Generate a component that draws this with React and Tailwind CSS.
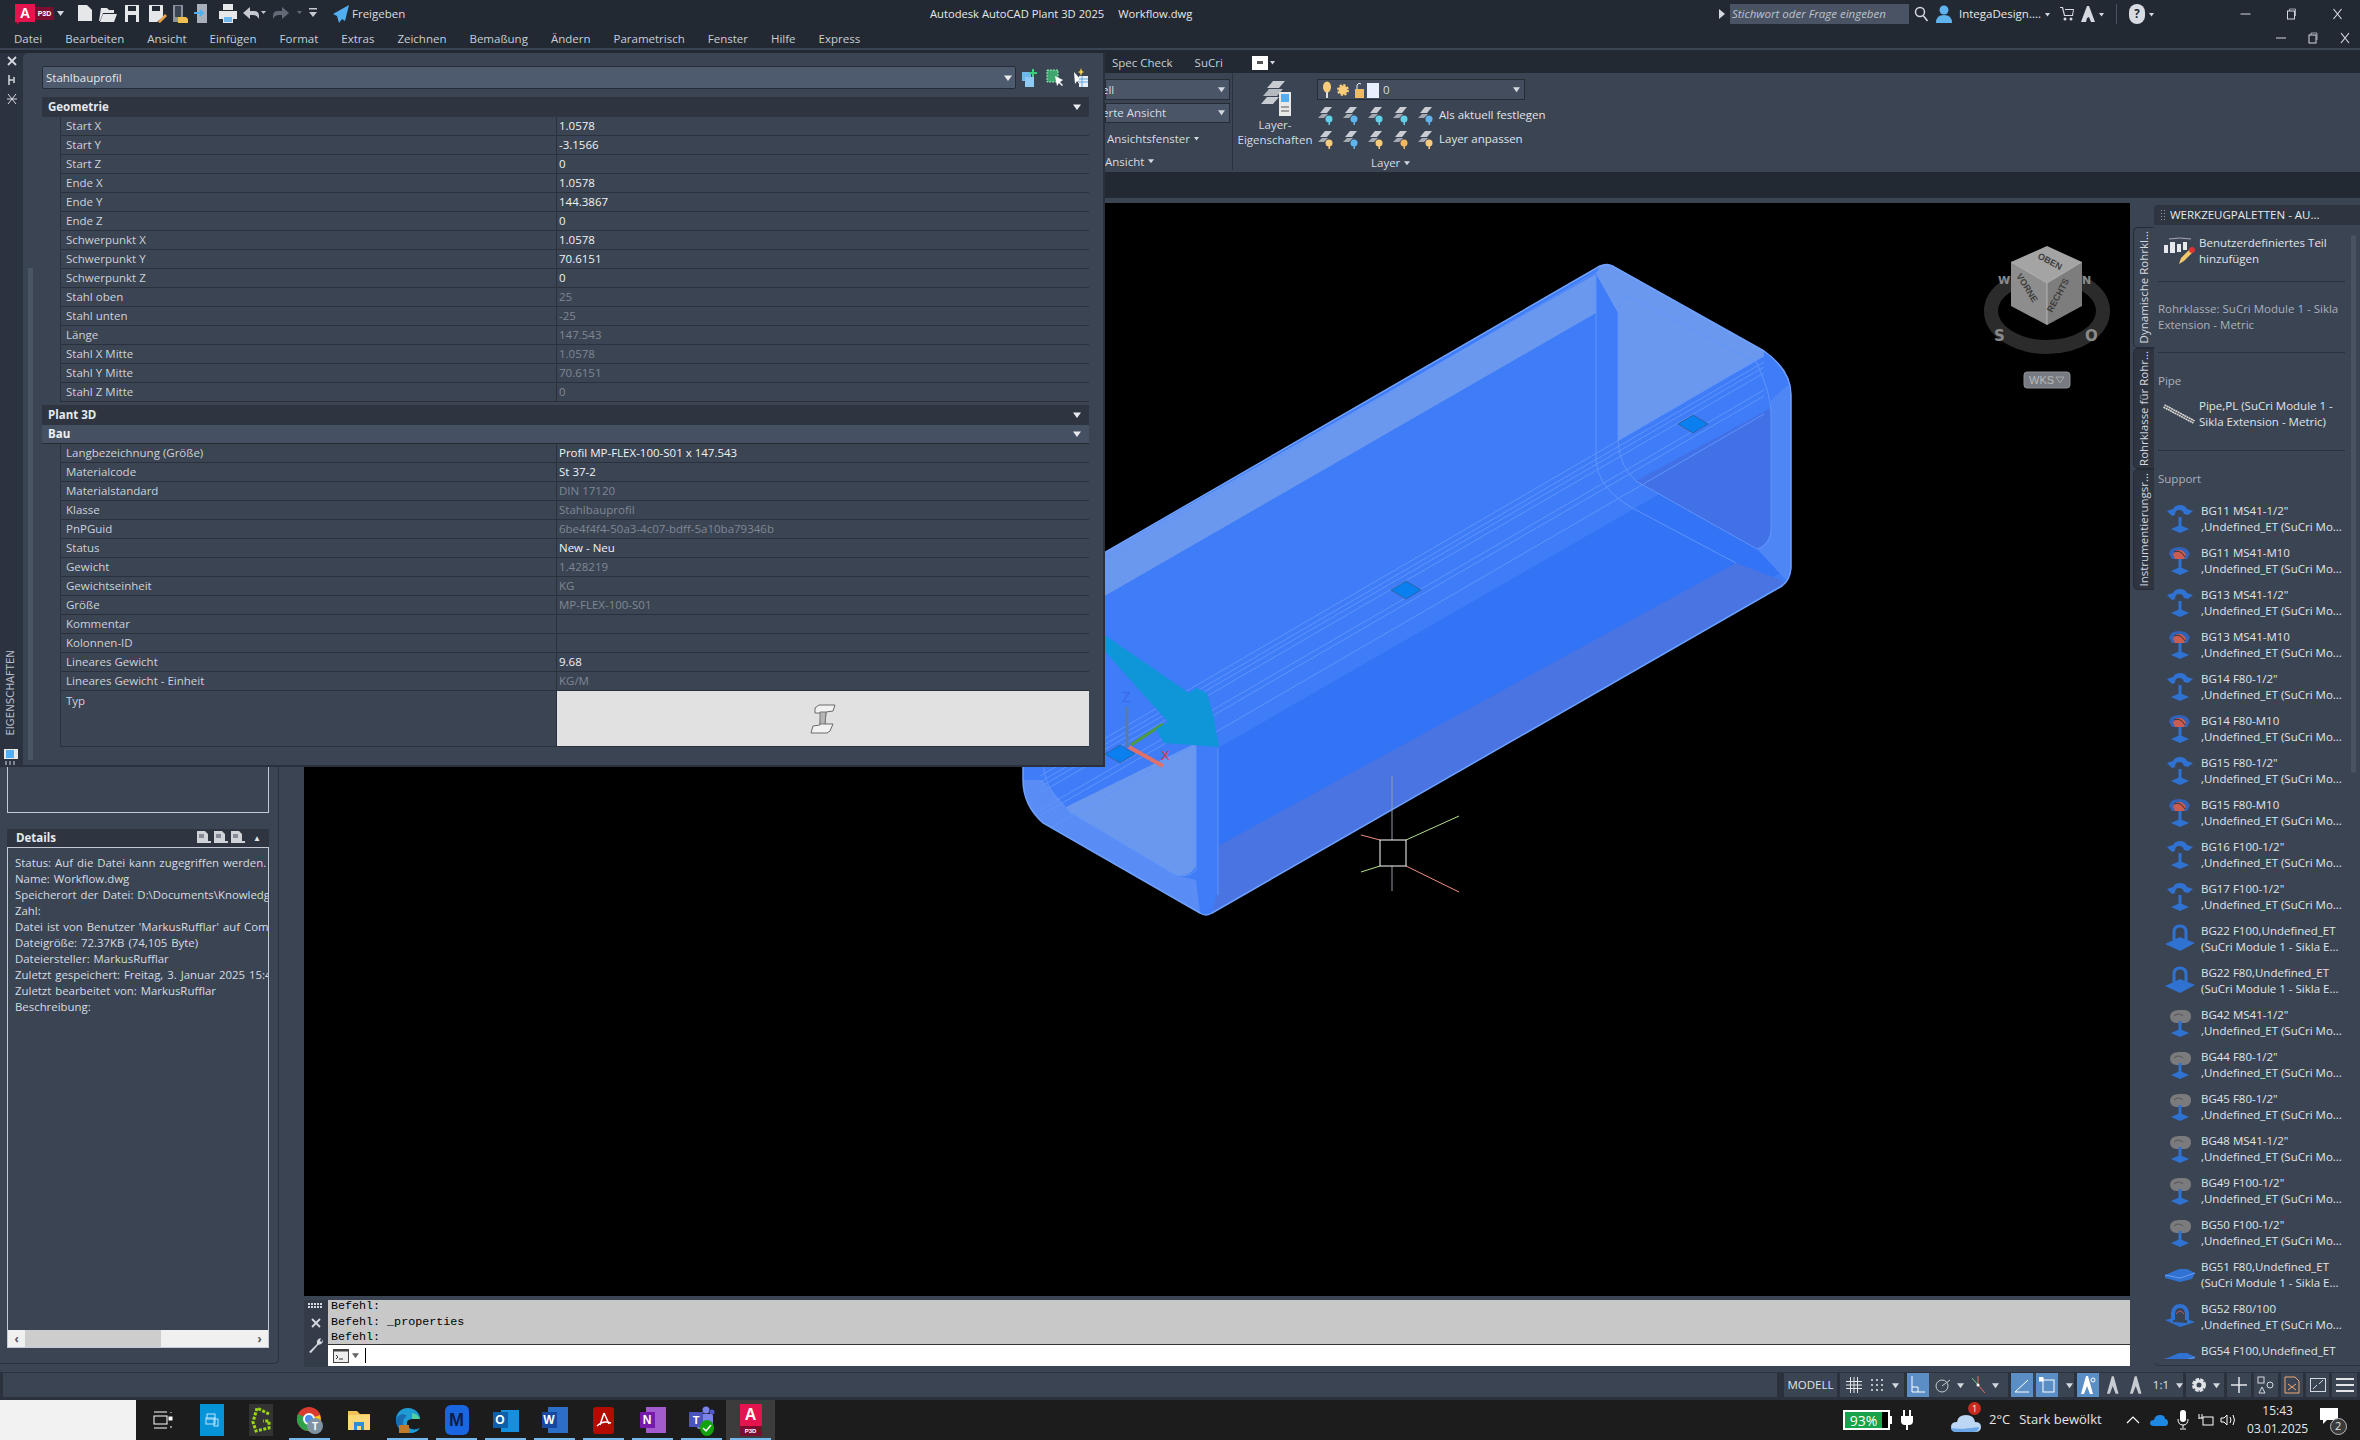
import React from "react";

const menu = ["Datei","Bearbeiten","Ansicht","Einfügen","Format","Extras","Zeichnen","Bemaßung","Ändern","Parametrisch","Fenster","Hilfe","Express"];
const geo = [["Start X","1.0578",1],["Start Y","-3.1566",1],["Start Z","0",1],["Ende X","1.0578",1],["Ende Y","144.3867",1],["Ende Z","0",1],["Schwerpunkt X","1.0578",1],["Schwerpunkt Y","70.6151",1],["Schwerpunkt Z","0",1],["Stahl oben","25",0],["Stahl unten","-25",0],["Länge","147.543",0],["Stahl X Mitte","1.0578",0],["Stahl Y Mitte","70.6151",0],["Stahl Z Mitte","0",0]];
const bau = [["Langbezeichnung (Größe)","Profil MP-FLEX-100-S01 x 147.543",1],["Materialcode","St 37-2",1],["Materialstandard","DIN 17120",0],["Klasse","Stahlbauprofil",0],["PnPGuid","6be4f4f4-50a3-4c07-bdff-5a10ba79346b",0],["Status","New - Neu",1],["Gewicht","1.428219",0],["Gewichtseinheit","KG",0],["Größe","MP-FLEX-100-S01",0],["Kommentar","",0],["Kolonnen-ID","",0],["Lineares Gewicht","9.68",1],["Lineares Gewicht - Einheit","KG/M",0]];
const details = ["Status: Auf die Datei kann zugegriffen werden.","Name: Workflow.dwg","Speicherort der Datei: D:\\Documents\\Knowledge","Zahl:","Datei ist von Benutzer 'MarkusRufflar' auf Com","Dateigröße: 72.37KB (74,105 Byte)","Dateiersteller: MarkusRufflar","Zuletzt gespeichert: Freitag, 3. Januar 2025 15:4","Zuletzt bearbeitet von: MarkusRufflar","Beschreibung:"];
const U = ",Undefined_ET (SuCri Mo...";
const S = "(SuCri Module 1 - Sikla E...";
const supports = [
  ['BG11 MS41-1/2"',U,"b"],["BG11 MS41-M10",U,"r"],['BG13 MS41-1/2"',U,"b"],["BG13 MS41-M10",U,"r"],
  ['BG14 F80-1/2"',U,"b"],["BG14 F80-M10",U,"r"],['BG15 F80-1/2"',U,"b"],["BG15 F80-M10",U,"r"],
  ['BG16 F100-1/2"',U,"b"],['BG17 F100-1/2"',U,"b"],["BG22 F100,Undefined_ET",S,"u"],["BG22 F80,Undefined_ET",S,"u"],
  ['BG42 MS41-1/2"',U,"g"],['BG44 F80-1/2"',U,"g"],['BG45 F80-1/2"',U,"g"],['BG48 MS41-1/2"',U,"g"],
  ['BG49 F100-1/2"',U,"g"],['BG50 F100-1/2"',U,"g"],["BG51 F80,Undefined_ET",S,"p"],["BG52 F80/100",U,"c"],["BG54 F100,Undefined_ET","\u00a0","p"],
];

function Caret({ c = "#d5d9df", s = 7 }) {
  return <svg width={s} height={s} viewBox="0 0 8 8" className="shrink-0"><path d="M0 1.5h8L4 7z" fill={c} /></svg>;
}

function SupportIcon({ k }) {
  const blue = "#2f72d2";
  const base = <><rect x="12.500" y="13" width="3" height="11" fill={blue} /><path d="M5 25l9-4 9 4-9 4z" fill={blue} /></>;
  if (k === "b") return <svg width="28" height="30" viewBox="0 0 28 30"><path d="M1 7l6-2Q9 1 14 1t7 4l6 2-5 4-4-1Q17 6 13 6t-4 5l-3 1z" fill={blue} />{base}</svg>;
  if (k === "r") return <svg width="28" height="30" viewBox="0 0 28 30"><path d="M3 8Q4 1 13 1t11 7l-3 5H6z" fill="#2f62b8" /><path d="M7 9Q8 4 13 4t7 5l-2 4H9z" fill="#cc5b50" /><path d="M8 6q6-3 11 5" stroke="#333" fill="none" />{base}</svg>;
  if (k === "g") return <svg width="28" height="30" viewBox="0 0 28 30"><path d="M4 8Q5 2 13 2h6q6 1 6 6 0 6-6 7H10Q4 14 4 8z" fill="#7b7b7d" /><path d="M8 8q4-4 9 0" stroke="#555" fill="none" />{base}</svg>;
  if (k === "u") return <svg width="32" height="30" viewBox="0 0 32 30"><path d="M10 16V8q0-6 6-6t6 6v8" stroke={blue} strokeWidth="3" fill="none" /><path d="M1 20l15-7 15 6-15 8z" fill={blue} /></svg>;
  if (k === "c") return <svg width="32" height="30" viewBox="0 0 32 30"><path d="M9 18V11q1-7 7-7t7 7v7" stroke={blue} strokeWidth="4" fill="none" /><path d="M12 12q4-6 8 0" stroke="#c0556a" fill="none" /><path d="M1 18l8-2v4l14 1v-4l8 3-15 5z" fill={blue} /></svg>;
  return <svg width="32" height="30" viewBox="0 0 32 30"><path d="M1 15l14-6h8l8 4-3 6-12 3-15-4z" fill={blue} /><path d="M1 15l15 3 15-5" stroke="#6a9cf0" fill="none" /></svg>;
}

function PropRow({ l, v, e }) {
  return (
    <div className="ml-[18px] grid grid-cols-[496px_1fr] h-[19px] border-b border-l border-[#2a313c] bg-[#3b4452]">
      <div className="border-r border-[#2a313c] pl-[5px] leading-[18px] text-[#ccd2da] whitespace-nowrap">{l}</div>
      <div className={"pl-[2px] leading-[18px] whitespace-nowrap " + (e ? "text-[#f0f2f5]" : "text-[#7f8794]")}>{v}</div>
    </div>
  );
}

function Section({ t, sel }) {
  return (
    <div className={"flex items-center justify-between pl-[6px] pr-[8px] font-bold " + (sel ? "h-[19px] bg-[#465063] text-[#eef0f3] border-b border-[#252b35]" : "h-[20px] bg-[#2e3541] text-[#e6e9ed]")}>
      <span>{t}</span><Caret c="#e8eaee" s={8} />
    </div>
  );
}

function QatIcons() {
  const w = "#e6e7e9";
  return (
    <div className="flex items-center h-[28px]">
      <svg width="60" height="22" viewBox="0 0 60 22" className="ml-[14px] shrink-0"><rect x="1" y="1" width="20" height="18" fill="#e5134e" /><path d="M1 19l4 3V19z" fill="#a50d3a" /><rect x="21" y="4" width="19" height="13" fill="#7a0e30" /><text x="11" y="15" fill="#fff" fontSize="14" fontWeight="700" textAnchor="middle" fontFamily="Liberation Sans">A</text><text x="30.5" y="13" fill="#fff" fontSize="7" fontWeight="700" textAnchor="middle" fontFamily="Liberation Sans">P3D</text><path d="M43 8h7l-3.500 5z" fill="#d5d9df" /></svg>
      <svg width="278" height="24" viewBox="0 0 278 24" className="ml-[1px] shrink-0">
        <path d="M3 3h9l5 5v11H3z" fill={w} />
        <path d="M26 6h6l2 2h5v3h-11l-3 8h-1z M28 12h14l-3 8H25z" fill={w} />
        <path d="M50 3h14v17H50z" fill={w} /><rect x="53" y="4" width="8" height="5" fill="#222933" /><rect x="53" y="13" width="8" height="7" fill="#222933" />
        <path d="M74 3h14v12l-6 5h-8z" fill={w} /><rect x="77" y="4" width="8" height="5" fill="#222933" /><path d="M83 20l7-8 2 2-7 7z" fill="#f0a64a" />
        <path d="M98 3h10v17H98z" fill="#8c929c" /><rect x="100" y="4" width="6" height="11" fill="#3b4453" /><path d="M103 15h8l2 2v4h-10z" fill="#f2bd54" />
        <rect x="122" y="2" width="10" height="19" fill="#aab0b9" /><path d="M119 11h8M125 8l3 3-3 3" stroke="#4cb1ef" strokeWidth="2" fill="none" />
        <path d="M148 2h10v6h-10z M144 9h18v8h-18z M148 14h10v7h-10z" fill={w} /><rect x="149" y="15" width="8" height="5" fill="#6fb8ee" />
        <path d="M168 11l7-6v4h4q5 0 5 5v3q-2-4-6-4h-3v4z" fill="#c6cad0" /><path d="M186 9h5l-2.500 3z" fill="#c6cad0" />
        <path d="M214 11l-7-6v4h-4q-5 0-5 5v3q2-4 6-4h3v4z" fill="#636a76" /><path d="M222 9h5l-2.500 3z" fill="#636a76" />
        <path d="M234 6h8v1.500h-8z M234 10h8l-4 5z" fill="#c6cad0" />
        <path d="M274 3l-16 9 4 2 2 7 3-4 3 2z" fill="#53aef0" />
      </svg>
      <span className="ml-[-1px] text-[#d9dde2]">Freigeben</span>
    </div>
  );
}

function WindowControls({ w, gap }) {
  return (
    <div className="flex items-center text-[#d5d9df]" style={{ gap }}>
      <svg width={w} height="10" viewBox="0 0 10 10"><path d="M0 5h10" stroke="currentColor" /></svg>
      <svg width={w} height="12" viewBox="0 0 10 12"><rect x="1" y="3" width="7" height="8" fill="none" stroke="currentColor" /><path d="M3 3V1h6v7" fill="none" stroke="currentColor" opacity=".7" /></svg>
      <svg width={w} height="12" viewBox="0 0 10 12"><path d="M1 1l8 10M9 1L1 11" stroke="currentColor" strokeWidth="1.2" /></svg>
    </div>
  );
}

function LayerIcons({ c }) {
  return (
    <svg width="138" height="20" viewBox="0 0 138 20" className="shrink-0">
      {[0, 25, 50, 75, 100].map((x, i) => (
        <g key={i} transform={`translate(${x} 0)`}>
          <path d="M3 8l5-6h7l-5 6z" fill="#c9ccd2" /><path d="M1 13l4-4h6l-4 4z" fill="#a5a9b1" />
          <circle cx="12" cy="14" r="3.500" fill={c[i]} />
          <rect x="11.500" y="15" width="1.500" height="5" fill={c[i]} />
        </g>
      ))}
    </svg>
  );
}

function Scene() {
  const stripes = [0, 6, 11, 17, 34, 40, 58];
  const outline = "M1616 268L1764 351Q1791 370 1791 395L1791 568Q1790 580 1782 586L1212 913Q1206 917 1200 913L1043 823Q1023 805 1023 780L1023 620Q1023 600 1040 590L1600 266Q1608 262 1616 268Z";
  return (
    <svg viewBox="304 203 1826 1093" width="1826" height="1093" className="absolute left-0 top-0">
      <defs><clipPath id="boxclip"><path d={outline} /></clipPath></defs>
      <path d={outline} fill="#3f7cf7" />
      <g clipPath="url(#boxclip)">
        <path d="M1771 430L1218 748L1218 889L1786 570Z" fill="#3373f5" />
        <path d="M1596 274L1596 313L1023 643L1023 620Q1023 600 1040 590Z" fill="#6b98ef" />
        <path d="M1596 274L1600 266Q1608 262 1616 268L1764 351L1764 356L1618 441L1618 313Z" fill="#6b98ef" />
        <path d="M1771 400L1788 385Q1791 390 1791 395L1791 568L1786 580L1757 549L1771 530Z" fill="#4f86f5" />
        <path d="M1636 481L1771 408L1771 530Q1768 545 1757 549Z" fill="#4270e6" />
        <path d="M1218 846L1736 563L1786 582L1212 913Q1216 900 1218 889Z" fill="#4a74e2" />
        <path d="M1071 813L1175 875Q1190 878 1196 866L1196 743L1064 808Z" fill="#6b98ef" />
        <path d="M1043 780L1071 813L1175 875L1196 880L1200 913L1043 823Q1023 805 1023 780Z" fill="#5a8cf5" />
        <g stroke="#5f95fb" fill="none" strokeWidth="1">
          {stripes.map((o) => <path key={o} d={`M1764 ${356 + o}L1040 ${776 + o}`} />)}
          <path d="M1596 276V460Q1598 490 1636 510L1736 563" />
          <path d="M1618 313V441Q1620 468 1636 481L1757 549Q1771 545 1771 530V412Q1771 395 1757 363L1629 296Q1622 298 1618 313" />
          <path d="M1196 743V870Q1190 878 1175 875L1071 813Q1043 790 1043 760V660" />
          <path d="M1218 748V895" />
          <path d="M1600 270L1040 596" />
        </g>
      </g>
      <path d={outline} fill="none" stroke="#6fa2ff" strokeWidth="1.500" />
      {[[1693, 424], [1406, 590], [1120, 754]].map(([x, y]) => <path key={x} d={`M${x - 15} ${y}L${x} ${y - 9}L${x + 15} ${y}L${x} ${y + 9}Z`} fill="#0a7ff0" stroke="#35507a" strokeWidth=".6" />)}
      <path d="M1127 707V747" stroke="#5a7ba8" strokeWidth="3" />
      <path d="M1131 745L1163 724" stroke="#4f9a3a" strokeWidth="3" />
      <path d="M1129 747L1163 766" stroke="#e0706a" strokeWidth="4" />
      <text x="1122" y="702" fill="#3a68e8" fontSize="14" fontFamily="Liberation Sans">Z</text>
      <text x="1161" y="760" fill="#e33" fontSize="13" fontFamily="Liberation Sans">X</text>
      <path d="M1096 629L1106 636L1189 693L1196 688L1207 693L1214 719L1219 747L1164 743L1156 729L1168 722L1100 646Z" fill="#0f96d8" />
      <g fill="none" strokeWidth="1">
        <path d="M1392 776V840M1392 866V891" stroke="#8f9ba8" />
        <path d="M1406 840L1459 816M1380 866L1361 872" stroke="#b6e08e" />
        <path d="M1380 840L1361 835M1406 866L1459 892" stroke="#ee8f80" />
        <rect x="1380" y="840" width="26" height="26" stroke="#fff" />
      </g>
      <ellipse cx="2047" cy="311" rx="56" ry="36" fill="none" stroke="#2b2b2b" strokeWidth="14" />
      <g fontFamily="DejaVu Sans" fontWeight="700" fill="#8a8a8a">
        <text x="1994" y="341" fontSize="15">S</text><text x="2085" y="341" fontSize="15">O</text>
        <text x="1998" y="284" fontSize="11">W</text><text x="2082" y="284" fontSize="11">N</text>
      </g>
      <path d="M2047 246L2082 262L2047 283L2011 262Z" fill="#a4a4a4" />
      <path d="M2011 262L2047 283V325L2011 306Z" fill="#8d8d8d" />
      <path d="M2082 262L2047 283V325L2082 306Z" fill="#7d7d7d" />
      <path d="M2011 262L2047 283L2082 262M2047 283V325" stroke="#d6d6d6" strokeWidth=".6" fill="none" />
      <g fontFamily="Liberation Sans" fontWeight="700" fill="#3d3d3d">
        <text transform="translate(2037 258) rotate(28)" fontSize="9">OBEN</text>
        <text transform="translate(2016 276) rotate(58)" fontSize="9">VORNE</text>
        <text transform="translate(2052 313) rotate(-62)" fontSize="9">RECHTS</text>
      </g>
      <rect x="2024" y="372" width="46" height="16" rx="3" fill="#777a80" stroke="#8b8e93" />
      <text x="2029" y="384" fill="#b8babd" fontSize="11" fontFamily="Liberation Sans">WKS</text>
      <path d="M2056 377h8l-4 6z" fill="none" stroke="#a5a7ab" />
    </svg>
  );
}

function StatusBar() {
  const Box = ({ w, children, cls = "" }) => <div className={"h-[24px] flex items-center justify-center bg-[#3b4453] text-[#e0e4e9] " + cls} style={{ width: w }}>{children}</div>;
  const Act = ({ children }) => <span className="h-[24px] w-[22px] bg-[#5b8ec5] flex items-center justify-center shrink-0">{children}</span>;
  return (
    <div className="h-[28px] bg-[#2b323e] flex items-start pt-[1px] gap-[3px] pl-[3px] shrink-0">
      <div className="h-[24px] w-[1774px] bg-[#3b4453] mr-[4px]" />
      <Box w={53}>MODELL</Box>
      <Box w={64} cls="gap-[8px]">
        <svg width="16" height="16" viewBox="0 0 16 16" stroke="#e4e6ea" fill="none"><path d="M4.500 0v16M8 0v16M11.500 0v16M0 4.500h16M0 8h16M0 11.500h16" /></svg>
        <svg width="14" height="14" viewBox="0 0 14 14" fill="#e4e6ea"><circle cx="2" cy="2" r="1" /><circle cx="7" cy="2" r="1" /><circle cx="12" cy="2" r="1" /><circle cx="2" cy="7" r="1" /><circle cx="7" cy="7" r="1" /><circle cx="12" cy="7" r="1" /><circle cx="2" cy="12" r="1" /><circle cx="7" cy="12" r="1" /><circle cx="12" cy="12" r="1" /></svg>
        <Caret />
      </Box>
      <Box w={101} cls="gap-[6px] justify-start">
        <Act><svg width="16" height="18" viewBox="0 0 16 18" stroke="#fff" fill="none"><path d="M2 0v16h13M2 11h6v5" /></svg></Act>
        <svg width="16" height="16" viewBox="0 0 16 16" stroke="#c8ccd2" fill="none"><circle cx="7" cy="9" r="6" /><path d="M7 9L15 3" /></svg><Caret />
        <svg width="16" height="18" viewBox="0 0 16 18" fill="none"><path d="M8 0v9" stroke="#ee6a5f" /><path d="M8 9l7 8" stroke="#ee6a5f" /><path d="M8 9L2 2" stroke="#6ed08a" /><circle cx="8" cy="9" r="1.500" fill="#fff" /></svg><Caret />
      </Box>
      <Box w={63} cls="gap-[3px] justify-start">
        <Act><svg width="16" height="16" viewBox="0 0 16 16" stroke="#fff" fill="none"><path d="M1 15h14M1 15L14 3" /></svg></Act>
        <Act><svg width="16" height="16" viewBox="0 0 16 16" stroke="#fff" fill="none"><rect x="4" y="3" width="11" height="12" /><rect x="0" y="0" width="4" height="4" fill="#fff" /></svg></Act>
        <span className="ml-[5px]"><Caret /></span>
      </Box>
      <Box w={106} cls="gap-[7px] justify-start">
        <Act><svg width="16" height="18" viewBox="0 0 16 18" fill="#fff"><path d="M6 0l2 0 5 18-3 0-3-8-3 8-3 0z" /><circle cx="13" cy="4" r="2" fill="none" stroke="#fff" /></svg></Act>
        <svg width="16" height="18" viewBox="0 0 16 18" fill="#c8ccd2"><path d="M6 0l2 0 5 18-3 0-3-8-3 8-3 0z" /></svg>
        <svg width="16" height="18" viewBox="0 0 16 18" fill="#c8ccd2"><path d="M7 0l2 0 5 18-3 0-3-8-3 8-3 0z" /></svg>
        <span className="ml-[2px]">1:1</span><Caret />
      </Box>
      <Box w={38} cls="gap-[6px]">
        <svg width="16" height="16" viewBox="0 0 16 16"><circle cx="8" cy="8" r="5" fill="none" stroke="#dfe2e6" strokeWidth="4" strokeDasharray="3 1" /><circle cx="8" cy="8" r="4" fill="none" stroke="#dfe2e6" strokeWidth="3" /></svg><Caret />
      </Box>
      <Box w={24}><svg width="16" height="16" viewBox="0 0 16 16" stroke="#e6e8eb" strokeWidth="1.500"><path d="M8 0v16M0 8h16" /></svg></Box>
      <Box w={24}><svg width="18" height="18" viewBox="0 0 18 18" stroke="#d5d9df" fill="none"><rect x="1" y="1" width="6" height="6" /><circle cx="13" cy="9" r="3" /><path d="M5 11l3 6H2z" /></svg></Box>
      <Box w={22}><svg width="16" height="18" viewBox="0 0 16 18" stroke="#f0a873" fill="none"><path d="M1 1h10l4 4v12H1z" /><path d="M4 8l8 6M12 8l-8 6" /></svg></Box>
      <Box w={23}><svg width="16" height="14" viewBox="0 0 16 14" stroke="#d5d9df" fill="none"><rect x="0.500" y="0.500" width="15" height="13" /><path d="M3 11l4-4M9 6l4-4" /></svg></Box>
      <Box w={25}><svg width="18" height="14" viewBox="0 0 18 14" stroke="#e2e4e8" strokeWidth="2"><path d="M0 1h18M0 7h18M0 13h18" /></svg></Box>
    </div>
  );
}

function Tile({ children, on, active }) {
  return (
    <div className={"w-[49px] h-[40px] flex items-center justify-center relative shrink-0 " + (active ? "bg-[#3c3c3c]" : "")}>
      {children}
      {on && <div className="absolute left-[4px] right-[4px] bottom-0 h-[2px] bg-[#76b9ed]" />}
    </div>
  );
}

function Taskbar() {
  const L = "font-['Liberation_Sans',sans-serif] font-bold";
  return (
    <div className="h-[40px] bg-[#1c1c1c] flex items-center shrink-0 text-[#e6e6e6]">
      <div className="w-[136px] h-[40px] bg-[#f2f2f2] mr-[2px] shrink-0" />
      <Tile><svg width="20" height="20" viewBox="0 0 20 20" stroke="#fff" fill="none"><path d="M1 2h13M1 18h13" /><rect x="1" y="6" width="13" height="8" /><rect x="16" y="7" width="3" height="3" fill="#fff" /><path d="M18 2v1M18 16v2" /></svg></Tile>
      <Tile><div className="w-[24px] h-[32px] bg-[#0693d8] flex items-center justify-center"><svg width="14" height="14" viewBox="0 0 14 14" stroke="#bde3f8" fill="none"><rect x="2" y="1" width="8" height="5" /><rect x="1" y="5" width="9" height="6" /><rect x="9" y="6" width="4" height="7" /></svg></div></Tile>
      <Tile><div className="w-[24px] h-[32px] bg-[#333] flex items-center justify-center"><svg width="22" height="28" viewBox="0 0 22 28" stroke="#9ad80f" strokeWidth="3" fill="none" strokeDasharray="3 1.500"><path d="M19 8L7 2 3 16l3 9 13-3V15h-6" /></svg></div></Tile>
      <Tile on><svg width="28" height="30" viewBox="0 0 28 30"><circle cx="13" cy="14" r="12" fill="#db3b2f" /><path d="M13 14L2 9a12 12 0 0 0 10 17z" fill="#2fa14b" /><path d="M13 14l11-4a12 12 0 0 1-12 16z" fill="#f5c518" /><circle cx="13" cy="14" r="5" fill="#4b8cf0" stroke="#fff" strokeWidth="2" /><circle cx="19" cy="21" r="8" fill="#7f93a3" /><text x="19" y="25" fontSize="10" fontWeight="700" fill="#fff" textAnchor="middle" fontFamily="Liberation Sans">T</text></svg></Tile>
      <Tile><svg width="24" height="24" viewBox="0 0 24 24"><path d="M1 3h9l3 3h10v16H1z" fill="#f3c15a" /><rect x="1" y="7" width="22" height="15" fill="#fbd979" /><path d="M7 14h10v8h-3v-4h-4v4H7z" fill="#2a8ed8" /></svg></Tile>
      <Tile on><svg width="26" height="30" viewBox="0 0 26 30"><path d="M13 3C5 3 1 9 1 15c0 8 7 13 14 13 5 0 8-2 10-5-6 3-13 1-13-5 0-3 3-4 6-4h7C25 8 20 3 13 3z" fill="#1f9bd6" /><path d="M1 15C3 9 9 8 12 11c-2 1-4 3-4 7 0 4 3 8 7 10-8 0-14-5-14-13z" fill="#1b6bb0" /><path d="M17 8q6 1 8 6h-8z" fill="#52d1a0" /><rect x="4" y="20" width="10" height="8" fill="#c07a2a" /></svg></Tile>
      <Tile on><div className="w-[24px] h-[30px] rounded-[6px] bg-[#1a66e0] flex items-center justify-center"><span className={L + " text-[18px] text-[#0d1f4a]"}>M</span></div></Tile>
      <Tile on><div className="relative w-[26px] h-[28px]"><div className="absolute right-0 top-[4px] w-[18px] h-[22px] bg-[#1490df]" /><div className="absolute left-0 top-[6px] w-[15px] h-[16px] bg-[#0f5ea8] flex items-center justify-center"><span className={L + " text-[12px] text-white"}>O</span></div></div></Tile>
      <Tile on><div className="relative w-[26px] h-[28px]"><div className="absolute right-0 top-[1px] w-[20px] h-[26px] bg-[#2b6fc9]" /><div className="absolute left-0 top-[6px] w-[15px] h-[16px] bg-[#17479e] flex items-center justify-center"><span className={L + " text-[12px] text-white"}>W</span></div></div></Tile>
      <Tile on><div className="w-[21px] h-[27px] rounded-[3px] bg-[#b30b00] flex items-center justify-center"><svg width="16" height="16" viewBox="0 0 16 16" stroke="#fff" strokeWidth="1.500" fill="none"><path d="M8 1L4 13M8 1l5 11M1 14q6-6 14-3" /></svg></div></Tile>
      <Tile on><div className="relative w-[26px] h-[28px]"><div className="absolute right-0 top-[1px] w-[20px] h-[26px] bg-[#a35bd0]" /><div className="absolute left-0 top-[6px] w-[15px] h-[16px] bg-[#7719aa] flex items-center justify-center"><span className={L + " text-[12px] text-white"}>N</span></div></div></Tile>
      <Tile on><svg width="30" height="32" viewBox="0 0 30 32"><circle cx="19" cy="6" r="3.500" fill="#7b83eb" /><circle cx="25" cy="8" r="2.500" fill="#5059c9" /><rect x="10" y="10" width="16" height="15" rx="2" fill="#7b83eb" /><rect x="2" y="8" width="14" height="15" fill="#4b53bc" /><text x="9" y="20" fill="#fff" fontSize="11" fontWeight="700" textAnchor="middle" fontFamily="Liberation Sans">T</text><ellipse cx="20" cy="24" rx="7" ry="8" fill="#13a10e" /><path d="M16 24l3 3 5-6" stroke="#fff" strokeWidth="1.500" fill="none" /></svg></Tile>
      <Tile on active><div className="flex flex-col w-[22px] h-[32px]"><div className="h-[22px] bg-[#e5134e] flex items-center justify-center"><span className={L + " text-[16px] text-white"}>A</span></div><div className="h-[10px] bg-[#7a0e30] flex items-center justify-center"><span className={L + " text-[6px] text-white"}>P3D</span></div></div></Tile>
      <div className="ml-auto flex items-center h-[40px] w-[517px] shrink-0">
        <div className="flex items-center w-[47px] h-[20px] border-2 border-white bg-black relative shrink-0">
          <div className="h-full w-[37px] bg-[#16a34a] flex items-center justify-center text-[14px] text-white">93%</div>
          <div className="absolute right-[-4px] top-[4px] w-[2px] h-[8px] bg-white" />
        </div>
        <svg width="14" height="20" viewBox="0 0 14 20" fill="#fff" className="ml-[10px] shrink-0"><path d="M3 0h2v6H3zM9 0h2v6H9zM1 6h12v5q0 4-4 4H8v5H6v-5H5q-4 0-4-4z" /></svg>
        <div className="relative ml-[37px] shrink-0 w-[30px] h-[28px]">
          <svg width="30" height="28" viewBox="0 0 30 28"><path d="M6 26q-6 0-6-5t6-5q1-7 9-7t9 7q6 0 6 5t-6 5z" fill="#bcd7f3" /><path d="M6 26q-6 0-6-4 8 2 28-1 0 5-6 5z" fill="#6ba7e6" /></svg>
          <div className="absolute right-[0px] top-[-4px] w-[13px] h-[13px] rounded-full bg-[#c92a1e] flex items-center justify-center text-[9px] text-white">1</div>
        </div>
        <span className="ml-[8px] text-[13px] whitespace-nowrap">2°C</span>
        <span className="ml-[9px] text-[13px] whitespace-nowrap">Stark bewölkt</span>
        <svg width="14" height="8" viewBox="0 0 14 8" stroke="#fff" fill="none" className="ml-[24px] shrink-0"><path d="M1 7l6-6 6 6" strokeWidth="1.200" /></svg>
        <svg width="18" height="11" viewBox="0 0 18 11" fill="#1e88e5" className="ml-[10px] shrink-0"><path d="M4 11q-4 0-4-3t4-3q1-5 6-5t5 4q3 0 3 3.500T15 11z" /></svg>
        <svg width="12" height="20" viewBox="0 0 12 20" fill="#fff" className="ml-[9px] shrink-0"><rect x="3" y="0" width="6" height="12" rx="3" /><path d="M1 9q0 6 5 6t5-6M6 15v3M3 19h6" stroke="#fff" fill="none" /></svg>
        <svg width="16" height="14" viewBox="0 0 16 14" stroke="#fff" fill="none" className="ml-[9px] shrink-0"><rect x="5" y="4" width="10" height="8" /><path d="M1 1v5M4 1v5M1 5h3" /></svg>
        <svg width="16" height="16" viewBox="0 0 16 16" stroke="#fff" fill="none" className="ml-[6px] shrink-0"><path d="M1 6h3l3-3v10l-3-3H1zM10 5q2 3 0 6M13 3q3 5 0 10" /></svg>
        <div className="ml-[12px] w-[60px] flex flex-col items-center text-[12px] leading-[18px] shrink-0"><span>15:43</span><span>03.01.2025</span></div>
        <div className="relative ml-[12px] shrink-0 w-[24px] h-[26px]">
          <svg width="18" height="18" viewBox="0 0 18 18" fill="#fff"><path d="M0 1h18v12H7l-4 4v-4H0z" /></svg>
          <div className="absolute right-[-3px] bottom-[-2px] w-[17px] h-[17px] rounded-full bg-[#3a3a3a] border border-[#bbb] text-[11px] flex items-center justify-center">2</div>
        </div>
      </div>
    </div>
  );
}

export default function App() {
  const sel = "h-[21px] bg-[#4a5568] border border-[#262c36] flex items-center justify-between pr-[4px]";
  return (
    <div className="relative w-[2360px] h-[1440px] overflow-hidden flex flex-col bg-[#3b4453] font-['Open_Sans','Noto_Sans',sans-serif] text-[11.5px] text-[#d8dce2]">
      {/* title bar and menu */}
      <div className="h-[50px] shrink-0 bg-[#222933] border-b-2 border-[#3b4453]">
        <div className="h-[28px] flex items-center relative">
          <QatIcons />
          <div className="absolute left-[930px] top-[6px] text-[11.2px] text-[#e6e8eb] whitespace-nowrap">Autodesk AutoCAD Plant 3D 2025<span className="ml-[14px]">Workflow.dwg</span></div>
          <div className="ml-auto flex items-center h-[26px] text-[#d8dce2]">
            <svg width="6" height="10" viewBox="0 0 6 10"><path d="M0 0l6 5-6 5z" fill="#d5d9df" /></svg>
            <div className="ml-[5px] w-[179px] h-[20px] bg-[#4a5363] italic text-[#bcc2cb] leading-[20px] pl-[2px]">Stichwort oder Frage eingeben</div>
            <svg width="16" height="16" viewBox="0 0 16 16" stroke="#d5d9df" fill="none" strokeWidth="1.500" className="ml-[5px]"><circle cx="6" cy="6" r="4.500" /><path d="M9.500 10l4 5" /></svg>
            <svg width="16" height="18" viewBox="0 0 16 18" fill="#5fb4ee" className="ml-[6px]"><circle cx="8" cy="5" r="4.500" /><path d="M0 18q0-8 8-8t8 8z" /></svg>
            <span className="ml-[7px] text-[#e6e8eb]">IntegaDesign....</span>
            <span className="ml-[4px]"><Caret s={5} /></span>
            <svg width="14" height="16" viewBox="0 0 14 16" fill="#d5d9df" className="ml-[10px]"><path d="M0 1h3l2 8h7l1-5H5v-1h9l-1 7H4L2 2H0z" /><circle cx="5" cy="13" r="1.500" /><circle cx="11" cy="13" r="1.500" /></svg>
            <svg width="16" height="16" viewBox="0 0 16 16" fill="#d5d9df" className="ml-[6px]"><path d="M7 0h2l6 16h-4l-2-5-2 1-1 4H1z" /></svg>
            <span className="ml-[3px]"><Caret s={5} /></span>
            <div className="ml-[12px] w-px h-[20px] bg-[#4a5363]" />
            <div className="ml-[12px] w-[16px] h-[20px] rounded-full bg-[#d8dce2] text-[#222933] font-bold flex items-center justify-center">?</div>
            <span className="ml-[4px]"><Caret s={5} /></span>
            <div className="ml-[86px] mr-[17px]"><WindowControls w={11} gap={35} /></div>
          </div>
        </div>
        <div className="h-[20px] flex items-start pt-[3px] pl-[14px] gap-[23px] relative leading-[16px]">
          {menu.map((m) => <span key={m} className="text-[#c9ced6]">{m}</span>)}
          <div className="absolute right-[10px] top-[4px]"><WindowControls w={10} gap={22} /></div>
        </div>
      </div>

      {/* ribbon */}
      <div className="h-[23px] shrink-0 bg-[#222933] flex items-center pl-[1112px] pt-[2px] gap-[22px] text-[#c9ced6]">
        <span>Spec Check</span><span>SuCri</span>
        <span className="flex items-center gap-[2px] ml-[7px]"><span className="w-[16px] h-[14px] bg-white flex items-center justify-center"><span className="w-[6px] h-[3px] bg-[#555]" /></span><Caret s={5} /></span>
      </div>
      <div className="h-[99px] shrink-0 bg-[#3b4453] flex pl-[1105px] text-[#d8dce2]">
        <div className="w-[128px] border-r border-[#2b323e] mb-[2px] pt-[6px] pr-[2px] flex flex-col">
          <div className={sel}><span className="ml-[-4px]">ell</span><Caret /></div>
          <div className={sel + " mt-[3px]"}><span className="ml-[-4px]">erte Ansicht</span><Caret /></div>
          <div className="mt-[6px] h-[20px] flex items-center gap-[4px] pl-[2px]"><span>Ansichtsfenster</span><Caret s={5} /></div>
          <div className="mt-[4px] flex items-center gap-[4px]"><span>Ansicht</span><Caret s={6} /></div>
        </div>
        <div className="w-[84px] flex flex-col items-center pt-[7px]">
          <svg width="36" height="36" viewBox="0 0 36 36"><path d="M10 8l6-7h12l-6 7z" fill="#c8cbd1" /><path d="M6 16l6-7h14l-6 7z" fill="#b5b9c0" /><path d="M4 24l6-7h12l-6 7z" fill="#c8cbd1" /><rect x="22" y="12" width="12" height="24" fill="#e8e8e8" /><rect x="24" y="14" width="8" height="8" fill="#56aef0" /><path d="M24 27h8M24 31h8" stroke="#555" /></svg>
          <span className="mt-[1px] leading-[15px]">Layer-</span>
          <span className="leading-[15px]">Eigenschaften</span>
        </div>
        <div className="flex flex-col pt-[6px] w-[220px]">
          <div className="w-[208px] h-[21px] bg-[#434d5e] border border-[#262c36] flex items-center pl-[3px] pr-[4px] gap-[3px]">
            <svg width="58" height="18" viewBox="0 0 58 18"><ellipse cx="6" cy="6" rx="4" ry="5.500" fill="#f8cc7a" /><rect x="5" y="11" width="2" height="6" fill="#ddd" /><circle cx="22" cy="9" r="4.500" fill="#f8cc7a" stroke="#f8cc7a" strokeDasharray="2 1.500" strokeWidth="3" /><rect x="34" y="8" width="9" height="9" fill="#f4b860" /><path d="M36 8V4q2-3 4-1" stroke="#eee" fill="none" /><rect x="46" y="2" width="12" height="15" fill="#e8f0ff" /></svg>
            <span className="ml-[1px]">0</span><span className="ml-auto"><Caret /></span>
          </div>
          <div className="h-[24px] mt-[3px] flex items-center"><LayerIcons c={["#63d0e8","#5fb4ee","#63d0e8","#63d0e8","#5fb4ee"]} /><span className="ml-[-16px] text-[#e0e4e9] whitespace-nowrap">Als aktuell festlegen</span></div>
          <div className="h-[24px] flex items-center"><LayerIcons c={["#f8cc7a","#5fb4ee","#f8cc7a","#f4b860","#f8cc7a"]} /><span className="ml-[-16px] text-[#e0e4e9] whitespace-nowrap">Layer anpassen</span></div>
          <div className="mt-[3px] pl-[54px] flex items-center gap-[4px]"><span>Layer</span><Caret s={6} /></div>
        </div>
      </div>
      <div className="h-[26px] shrink-0 bg-[#222933]" />
      <div className="h-[5px] shrink-0 bg-[#3b4453]" />

      {/* work area */}
      <div className="h-[1169px] shrink-0 flex">
        <div className="w-[304px] shrink-0">
          <div className="w-[279px] h-[1161px] border-b border-r border-[#2a313c] rounded-br-[5px] pl-[7px] pr-[9px]">
            <div className="h-[610px] border border-[#c3cad5] border-t-0" />
            <div className="mt-[16px] h-[18px] bg-[#2e3541] flex items-center pl-[9px] pr-[8px] font-bold text-[#e6e9ed]">
              <span>Details</span>
              <span className="ml-auto flex items-center gap-[2px]">
                {[0, 1, 2].map((i) => <svg key={i} width="15" height="14" viewBox="0 0 15 14" fill="#cfd2d7"><path d="M1 0h8l3 3v7h3v2H1z" /><path d="M3 4h5M3 6h5" stroke="#3b4453" /></svg>)}
                <span className="ml-[6px] text-[8px]">▲</span>
              </span>
            </div>
            <div className="h-[501px] border border-[#c3cad5] flex flex-col overflow-hidden">
              <div className="flex-1 pl-[7px] pt-[7px]">
                {details.map((d) => <div key={d} className="h-[16px] leading-[16px] text-[11.4px] [word-spacing:1px] whitespace-nowrap text-[#d8dce2]">{d}</div>)}
              </div>
              <div className="h-[17px] bg-[#f0f0f0] flex items-center shrink-0">
                <span className="w-[17px] text-center text-[#555] font-bold leading-none">‹</span>
                <div className="w-[136px] h-[17px] bg-[#cdcdcd]" />
                <span className="ml-auto w-[17px] text-center text-[#555] font-bold leading-none">›</span>
              </div>
            </div>
          </div>
        </div>

        <div className="w-[1826px] shrink-0 flex flex-col">
          <div className="relative h-[1093px] shrink-0 bg-black overflow-hidden"><Scene /></div>
          <div className="mt-[4px] h-[67px] flex">
            <div className="w-[24px] bg-[#343c4a] flex flex-col items-center text-[#c9ced6]">
              <svg width="16" height="6" viewBox="0 0 16 6" fill="#d5d9df" className="mt-[3px]"><path d="M0 0h2v2H0zM3 0h2v2H3zM6 0h2v2H6zM9 0h2v2H9zM12 0h2v2h-2zM0 3h2v2H0zM3 3h2v2H3zM6 3h2v2H6zM9 3h2v2H9zM12 3h2v2h-2z" /></svg>
              <svg width="10" height="10" viewBox="0 0 10 10" stroke="#d5d9df" strokeWidth="1.800" className="mt-[9px]"><path d="M1 1l8 8M9 1L1 9" /></svg>
              <svg width="16" height="16" viewBox="0 0 16 16" fill="#d5d9df" className="mt-[9px]"><path d="M1 15l8-8q-1-5 4-6l-1 3 2 1 1-3q1 5-5 6l-7 8z" /></svg>
            </div>
            <div className="flex-1 flex flex-col font-['Liberation_Mono',monospace] text-[11.7px] text-black">
              <div className="h-[45px] bg-[#c8c8c8] pl-[3px] border-b border-[#333]">
                <div className="h-[15px] leading-[13px]">Befehl:</div>
                <div className="h-[15px] leading-[15px]">Befehl: _properties</div>
                <div className="h-[15px] leading-[15px]">Befehl:</div>
              </div>
              <div className="h-[21px] bg-white flex items-center pl-[5px] gap-[3px]">
                <svg width="16" height="14" viewBox="0 0 16 14"><rect x="0.500" y="0.500" width="15" height="13" fill="#eee" stroke="#444" /><rect x="0.500" y="0.500" width="15" height="2" fill="#444" /><path d="M3 6l2 2-2 2M6 10h4" stroke="#333" fill="none" /></svg>
                <Caret c="#666" />
                <div className="w-px h-[15px] bg-black ml-[3px]" />
              </div>
            </div>
          </div>
        </div>

        <div className="w-[230px] shrink-0 pt-[2px] flex">
          <div className="w-[24px] pl-[3px] pt-[22px] shrink-0 text-[#d5d9df]">
            {[["Dynamische Rohrkl...", 1], ["Rohrklasse für Rohr...", 0], ["Instrumentierungsr...", 0]].map(([t, a]) => (
              <div key={t} className={"h-[121px] w-[21px] border border-[#262c36] rounded-l-[5px] border-r-0 flex items-center justify-center overflow-hidden " + (a ? "bg-[#3b4453]" : "bg-[#2e3541]")}>
                <span className="[writing-mode:vertical-rl] rotate-180 whitespace-nowrap">{t}</span>
              </div>
            ))}
          </div>
          <div className="flex-1 min-w-0 flex flex-col h-[1161px] border-b border-[#2a313c] rounded-bl-[5px]">
            <div className="h-[20px] shrink-0 bg-[#2e3541] rounded-tl-[4px] flex items-center pl-[7px] gap-[5px] text-[#e6e9ed] whitespace-nowrap">
              <svg width="4" height="10" viewBox="0 0 4 10" fill="#99a0ab"><path d="M0 0h1v1H0zM3 0h1v1H3zM0 3h1v1H0zM3 3h1v1H3zM0 6h1v1H0zM3 6h1v1H3zM0 9h1v1H0zM3 9h1v1H3z" /></svg>
              WERKZEUGPALETTEN - AU...
            </div>
            <div className="relative h-[1134px] shrink-0 overflow-hidden pl-[4px] pr-[15px]">
              <div className="absolute right-[4px] top-[10px] w-[5px] h-[538px] bg-[#4a5362] rounded-[3px]" />
              <div className="h-[57px] flex items-center border-b border-[#2a313c] pb-[4px]">
                <svg width="32" height="28" viewBox="0 0 32 28" className="ml-[5px] shrink-0"><path d="M1 8h4v8H1zM7 5h5v11H7zM14 7h4v8h-4zM20 5h4v8h-4z" fill="#e6e8eb" /><path d="M6 2q10-2 22 0" stroke="#aab" fill="none" /><path d="M16 27l2-6 10-10 3 3-10 10z" fill="#f2c86a" /><circle cx="29" cy="13" r="3" fill="#d33" /></svg>
                <div className="ml-[4px] leading-[16px] text-[#e0e4e9] whitespace-nowrap">Benutzerdefiniertes Teil<br />hinzufügen</div>
              </div>
              <div className="h-[71px] flex items-center border-b border-[#2a313c] text-[#aab0ba] leading-[16px] whitespace-nowrap">Rohrklasse: SuCri Module 1 - Sikla<br />Extension - Metric</div>
              <div className="h-[98px] pt-[18px] border-b border-[#2a313c]">
                <div className="h-[20px] leading-[20px] text-[#aab0ba]">Pipe</div>
                <div className="flex items-center h-[36px] mt-[5px]">
                  <svg width="32" height="20" viewBox="0 0 32 20" className="ml-[5px] shrink-0"><path d="M1 2l30 16" stroke="#d8d8d8" strokeWidth="4" strokeDasharray="2 .5" /><path d="M1 2l30 16" stroke="#555" strokeWidth="1" /></svg>
                  <div className="ml-[4px] leading-[16px] text-[#e0e4e9] whitespace-nowrap">Pipe,PL (SuCri Module 1 -<br />Sikla Extension - Metric)</div>
                </div>
              </div>
              <div className="h-[20px] mt-[18px] leading-[20px] text-[#aab0ba]">Support</div>
              <div className="mt-[9px]">
                {supports.map(([a, b, k], i) => (
                  <div key={i} className="h-[42px] flex items-center shrink-0">
                    <div className="w-[43px] flex justify-center shrink-0"><SupportIcon k={k} /></div>
                    <div className="leading-[16px] text-[#e0e4e9] whitespace-nowrap">{a}<br />{b}</div>
                  </div>
                ))}
              </div>
            </div>
          </div>
        </div>
      </div>

      <StatusBar />
      <Taskbar />

      {/* floating properties palette */}
      <div className="absolute left-0 top-[50px] w-[1105px] h-[717px] flex flex-col bg-[#222933]">
        <div className="mt-[3px] flex-1 min-h-0 flex bg-[#2c3340] border-b-2 border-r-2 border-[#2a313c]">
          <div className="w-[23px] shrink-0 flex flex-col items-center relative text-[#c9ced6]">
            <svg width="10" height="10" viewBox="0 0 10 10" stroke="#d5d9df" strokeWidth="1.800" className="mt-[3px]"><path d="M1 1l8 8M9 1L1 9" /></svg>
            <svg width="10" height="10" viewBox="0 0 10 10" stroke="#d5d9df" strokeWidth="1.500" fill="none" className="mt-[9px]"><path d="M2 0v10M2 5h4M7 2v6" /></svg>
            <svg width="10" height="12" viewBox="0 0 10 12" stroke="#d5d9df" fill="none" className="mt-[8px]"><path d="M1 1l8 10M9 1L1 11M0 6h10" /></svg>
            <span className="absolute left-[4px] top-[597px] [writing-mode:vertical-rl] rotate-180 font-['DejaVu_Sans',sans-serif] text-[10.2px] leading-[14px] whitespace-nowrap text-[#b8bec8]">EIGENSCHAFTEN</span>
            <svg width="14" height="16" viewBox="0 0 14 16" className="absolute left-[4px] top-[696px]"><rect width="14" height="10" fill="#e8e8e8" /><rect x="2" y="1" width="8" height="8" fill="#56aef0" /><path d="M2 12v4M6 12v4M10 12v4" stroke="#d5d9df" /></svg>
          </div>
          <div className="flex-1 min-w-0 bg-[#3b4452] rounded-tl-[5px] pl-[19px] pr-[14px] pt-[13px] relative">
            <div className="absolute left-[5px] top-[215px] w-[5px] h-[492px] bg-[#4a5566]" />
            <div className="flex items-center h-[23px]">
              <div className="w-[974px] h-[23px] bg-[#4e5a6e] border border-[#262c36] rounded-[2px] flex items-center justify-between pl-[3px] pr-[3px] text-[#e6e8eb]">
                <span>Stahlbauprofil</span><Caret c="#e8eaee" s={8} />
              </div>
              <div className="ml-[4px] flex items-center gap-[7px]">
                <svg width="18" height="18" viewBox="0 0 18 18"><rect x="2" y="3" width="9" height="9" fill="#6fb9ef" /><rect x="5" y="8" width="9" height="10" fill="#8ecaf4" /><path d="M13 0v8M9 4h8" stroke="#3cd07e" strokeWidth="2" /></svg>
                <svg width="18" height="18" viewBox="0 0 18 18"><rect x="2" y="1" width="11" height="12" fill="#3fa66f" stroke="#9ae8b9" strokeDasharray="2 1" /><path d="M10 7l2 10 2-3 3 3 1-1-3-3 3-2z" fill="#fff" /></svg>
                <svg width="18" height="20" viewBox="0 0 18 20"><path d="M4 4l1 12 2-3 3 4 1-1-3-3 3-1z" fill="#fff" /><rect x="9" y="8" width="9" height="11" fill="#e8eef5" /><path d="M9 11h9M9 14h9M12 8v11" stroke="#5fa6e0" /><path d="M11 0l1 3 2 1-2 1-1 3-1-3-2-1 2-1z" fill="#f5cf50" /></svg>
              </div>
            </div>
            <div className="mt-[8px]"><Section t="Geometrie" /></div>
            {geo.map(([l, v, e]) => <PropRow key={l} l={l} v={v} e={e} />)}
            <div className="mt-[3px]"><Section t="Plant 3D" /></div>
            <Section t="Bau" sel />
            {bau.map(([l, v, e]) => <PropRow key={l} l={l} v={v} e={e} />)}
            <div className="ml-[18px] grid grid-cols-[496px_1fr] h-[56px] border-b border-l border-[#2a313c]">
              <div className="border-r border-[#2a313c] pl-[5px] pt-[1px] text-[#ccd2da]">Typ</div>
              <div className="bg-[#e1e1e1] flex items-center justify-center">
                <svg width="28" height="30" viewBox="0 0 28 30"><path d="M6 4l4-3h16l-2 6-7 1-1 12h8l-3 7-3 2H2l2-7 7-1 1-12H6z" fill="#f2f2f2" stroke="#6a6a6a" /><path d="M11 8h6l-1 12h-5z" fill="#b5b5b5" stroke="#777" /></svg>
              </div>
            </div>
          </div>
        </div>
      </div>
    </div>
  );
}
